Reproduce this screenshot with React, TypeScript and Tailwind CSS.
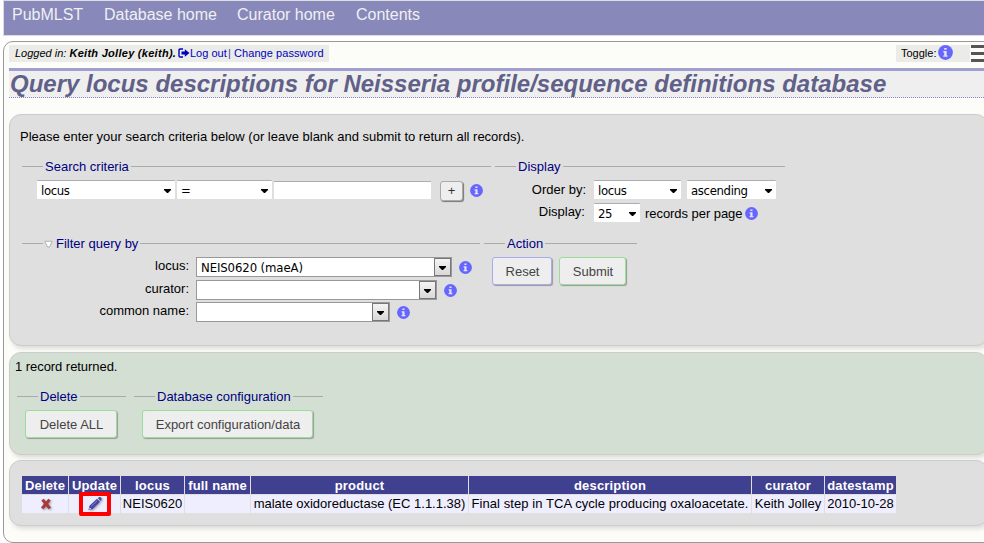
import React from "react";

function Info({ className = "size-[13px]" }: { className?: string }) {
  return (
    <svg viewBox="0 0 13 13" className={`shrink-0 ${className}`}>
      <circle cx="6.5" cy="6.5" r="6.4" fill="#6666ff" />
      <path d="M5.4 2.6h2.1v1.5H5.4zM4.6 5.3h2.9v3.8h.8v1.1H4.6V9.1h.8V6.4h-.8z" fill="#e4e4fa" />
    </svg>
  );
}

function Arrow() {
  return (
    <svg viewBox="0 0 7 4" className="h-1 w-[7px] shrink-0">
      <path d="M0 0h7v1L4 4H3L0 1z" fill="#000" />
    </svg>
  );
}

function Select({ children, className = "" }: { children?: React.ReactNode; className?: string }) {
  return (
    <div
      className={`flex h-[19px] shrink-0 items-center justify-between rounded-[1px] border-t border-t-[#abadb3] bg-white pt-px pr-1 pl-1 font-['DejaVu_Sans_Condensed','DejaVu_Sans',sans-serif] text-[13px] tracking-[-0.35px] whitespace-nowrap [font-stretch:condensed] ${className}`}
    >
      <span>{children}</span>
      <Arrow />
    </div>
  );
}

function Combo({ children, className = "" }: { children?: React.ReactNode; className?: string }) {
  return (
    <div
      className={`flex h-5 shrink-0 items-center justify-between border border-[#999] bg-white pl-1 font-['DejaVu_Sans_Condensed','DejaVu_Sans',sans-serif] text-[13px] tracking-[-0.1px] whitespace-nowrap [font-stretch:condensed] ${className}`}
    >
      <span className="pt-0.5">{children}</span>
      <span className="flex h-[18px] w-[17px] items-center justify-center border border-[#777] bg-linear-to-b from-[#f4f4f4] to-[#d8d8d8] pt-0.5">
        <Arrow />
      </span>
    </div>
  );
}

function Legend({ children, className = "", marker = false }: { children: React.ReactNode; className?: string; marker?: boolean }) {
  return (
    <div className={`flex h-4 items-start leading-4 text-[#000080] ${className}`}>
      <span className="mt-[7px] h-px w-[21px] shrink-0 bg-[#aaa]" />
      {marker && (
        <svg viewBox="0 0 9 8" className="mt-1 ml-px h-2 w-[9px] shrink-0">
          <path d="M.8 1.3h7.4L5.5 7h-2z" fill="#fff" stroke="#aaa" strokeWidth=".9" />
        </svg>
      )}
      <span className={`shrink-0 whitespace-nowrap ${marker ? "ml-[3px]" : "ml-0.5"}`}>{children}</span>
      <span className="mt-[7px] ml-0.5 h-px flex-1 bg-[#aaa]" />
    </div>
  );
}

function Button({ children, className = "" }: { children: React.ReactNode; className?: string }) {
  return (
    <button
      className={`flex h-7 shrink-0 items-center justify-center rounded-[3px] border bg-[#eee] pt-0.5 pl-px whitespace-nowrap text-[#444] shadow-[1px_1px_1px_#999] ${className}`}
    >
      {children}
    </button>
  );
}

const columns = [
  { title: "Delete", width: "w-[46px]", value: "delete" },
  { title: "Update", width: "w-[51px]", value: "update" },
  { title: "locus", width: "w-[63px]", value: "NEIS0620" },
  { title: "full name", width: "w-[65px]", value: "" },
  { title: "product", width: "w-[217px]", value: "malate oxidoreductase (EC 1.1.1.38)" },
  { title: "description", width: "w-[282px]", value: "Final step in TCA cycle producing oxaloacetate." },
  { title: "curator", width: "w-[72px]", value: "Keith Jolley" },
  { title: "datestamp", width: "w-[71px]", value: "2010-10-28" },
];

function Cell({ value }: { value: string }) {
  if (value === "delete")
    return (
      <svg viewBox="0 0 12 12" className="ml-px size-3.5 drop-shadow-[1px_1px_1px_#999]">
        <path d="M2 3l2-1.5 2 2.4 2-2.4L10 3 7.8 5.8 10.3 9 8.2 10.6 6 8l-2.2 2.6L1.7 9l2.5-3.2z" fill="#a83a3a" />
      </svg>
    );
  if (value === "update")
    return (
      <span className="relative">
        <svg viewBox="0 0 16 16" className="size-4 drop-shadow-[1px_1px_1px_#999]">
          <path d="M1.5 14l1-4.2L10 2.7l3 3-7.4 7.2zM10.8 2l1.5-1q1-.2 1.8.7t.5 1.8L13.7 5z" fill="#44a" />
          <path d="M4.3 10.3l5.8-5.6" stroke="#8c8cd8" strokeWidth=".9" />
          <path d="M2.6 11.4l1.8 1.7-1.7.5-.6-.6z" fill="#dde" />
        </svg>
        <span className="absolute -top-1 -left-2 h-6 w-8 rounded-[2px] border-4 border-[#f00]" />
      </span>
    );
  return <span className={value.startsWith("Final") ? "tracking-[0.07px]" : ""}>{value}</span>;
}

export default function App() {
  return (
    <div className="h-[543px] w-[984px] overflow-hidden bg-white font-['Liberation_Sans',Arial,sans-serif] text-[13px] leading-4 text-black">
      <nav className="ml-[3px] flex h-9 w-[990px] border border-[#ddd] bg-[#8888bb] pl-2 text-[16px] leading-[27px] whitespace-nowrap text-[#f0f0f0]">
        <span className="w-[92px]">PubMLST</span>
        <span className="w-[133px]">Database home</span>
        <span className="w-[119px]">Curator home</span>
        <span>Contents</span>
      </nav>
      <main className="mt-[5px] ml-[3px] h-[502px] w-[1000px] rounded-[10px] border border-[#999] bg-[#fcfdf8] pt-[3px] pl-[5px]">
        <div className="flex h-[17px] text-[11px] leading-[17px] whitespace-nowrap">
          <div className="flex w-[320px] bg-[#ebebe8] pl-1.5">
            <span className="w-[163px] italic">
              Logged in: <b className="tracking-[0.28px]">Keith Jolley (keith).</b>
            </span>
            <svg viewBox="0 0 12 10" className="mt-[3px] h-2.5 w-3">
              <path d="M5 1H2.2Q1 1 1 2.2v5.6Q1 9 2.2 9H5" fill="none" stroke="#0000c0" strokeWidth="1.4" />
              <path d="M3.5 3.6h3.3V1.2L11.5 5 6.8 8.8V6.4H3.5z" fill="#0000c0" />
            </svg>
            <span className="w-[38px] text-[#0000c0]">Log out</span>
            <span className="w-[6px] text-[#4040a0]">|</span>
            <span className="tracking-[0.07px] text-[#0000c0]">Change password</span>
          </div>
          <div className="ml-[567px] flex w-[74px] bg-[#ebebe8] pl-[5px]">
            <span className="w-[37px]">Toggle:</span>
            <Info className="size-[15px]" />
          </div>
          <div className="ml-px flex flex-col gap-[4px]">
            <span className="h-[3px] w-6 bg-[#555]" />
            <span className="h-[3px] w-6 bg-[#555]" />
            <span className="h-[3px] w-6 bg-[#555]" />
          </div>
        </div>
        <h1 className="mt-1.5 h-[30px] border-t-[3px] border-b border-t-[#a0a0d0] border-b-[#8888bb] bg-[#efefef] pl-px text-[24px] leading-[26px] font-bold whitespace-nowrap text-[#606088] italic [border-bottom-style:dotted]">
          Query locus descriptions for Neisseria profile/sequence definitions database
        </h1>

        <section className="mt-4 h-[232px] w-[979px] rounded-[12px] border border-[#ccc] bg-[#dfdfdf] pt-3.5 pl-2.5 shadow-[2px_3px_4px_#ddd]">
          <p>Please enter your search criteria below (or leave blank and submit to return all records).</p>
          <div className="mt-3.5 flex gap-1 pl-0.5">
            <div className="w-[469px]">
              <Legend>Search criteria</Legend>
              <div className="mt-[5px] flex pl-[15px]">
                <Select className="w-[138px]">locus</Select>
                <Select className="ml-0.5 w-[95px]">=</Select>
                <div className="mt-px ml-0.5 h-[18px] w-[157px] border-t border-[#abadb3] bg-white" />
                <button className="mt-px ml-[9px] flex h-5 w-[23px] items-center justify-center rounded-[3px] border border-[#aaa] bg-[#eee] text-[#333] shadow-[1px_1px_1px_#777]">
                  +
                </button>
                <Info className="mt-1 ml-[7px] size-[13px]" />
              </div>
            </div>
            <div className="w-[290px]">
              <Legend>Display</Legend>
              <div className="mt-[5px] flex">
                <span className="mt-0.5 w-[91px] text-right">Order by:</span>
                <Select className="ml-2 w-[87px]">locus</Select>
                <Select className="ml-1.5 w-[89px]">ascending</Select>
              </div>
              <div className="mt-1 flex whitespace-nowrap">
                <span className="mt-px w-[90px] text-right">Display:</span>
                <Select className="ml-[9px] w-[46px]">25</Select>
                <span className="mt-[3px] ml-[5px] w-[99px] tracking-[-0.05px]">records per page</span>
                <Info className="mt-1 ml-px size-[13px]" />
              </div>
            </div>
          </div>
          <div className="mt-3.5 flex gap-1 pl-0.5">
            <div className="w-[458px]">
              <Legend marker>Filter query by</Legend>
              <div className="mt-[5px] flex h-[23px]">
                <span className="mt-px w-[167px] text-right">locus:</span>
                <Combo className="ml-[7px] w-[256px]">NEIS0620 (maeA)</Combo>
                <Info className="mt-1 ml-[7px] size-[13px]" />
              </div>
              <div className="flex h-[22px]">
                <span className="mt-px w-[167px] text-right">curator:</span>
                <Combo className="ml-[7px] w-[241px]" />
                <Info className="mt-1 ml-[7px] size-[13px]" />
              </div>
              <div className="flex h-[22px]">
                <span className="mt-px w-[167px] text-right">common name:</span>
                <Combo className="ml-[7px] w-[194px]" />
                <Info className="mt-1 ml-[7px] size-[13px]" />
              </div>
            </div>
            <div className="w-[153px]">
              <Legend>Action</Legend>
              <div className="mt-[5px] flex gap-[7px] pl-2">
                <Button className="w-[60px] border-[#aae]">Reset</Button>
                <Button className="w-[67px] border-[#9d9]">Submit</Button>
              </div>
            </div>
          </div>
        </section>

        <section className="mt-1.5 h-[103px] w-[979px] rounded-[12px] border border-[#ccc] bg-[#d4dfd4] pt-1.5 pl-[5px] shadow-[2px_3px_4px_#ddd]">
          <p className="tracking-[-0.05px]">1 record returned.</p>
          <div className="mt-3.5 flex gap-2 pl-0.5">
            <div className="w-[109px]">
              <Legend>Delete</Legend>
              <Button className="mt-[5px] ml-2 w-[92px] border-[#9d9]">Delete ALL</Button>
            </div>
            <div className="w-[189px]">
              <Legend>Database configuration</Legend>
              <Button className="mt-[5px] ml-2 w-[171px] border-[#9d9]">Export configuration/data</Button>
            </div>
          </div>
        </section>

        <section className="mt-[5px] h-[66px] w-[979px] rounded-[12px] border border-[#ccc] bg-[#dfdfdf] pt-[15px] pl-3 shadow-[2px_3px_4px_#ddd]">
          <div className="flex gap-px">
            {columns.map((c) => (
              <div key={c.title} className={`flex shrink-0 flex-col gap-px whitespace-nowrap ${c.width}`}>
                <div className="flex h-[18px] items-center justify-center bg-[#404090] pt-0.5 font-bold tracking-[0.18px] text-white">{c.title}</div>
                <div className="flex h-[18px] items-center justify-center bg-[#eeeeff]">
                  <Cell value={c.value} />
                </div>
              </div>
            ))}
          </div>
        </section>
      </main>
    </div>
  );
}
